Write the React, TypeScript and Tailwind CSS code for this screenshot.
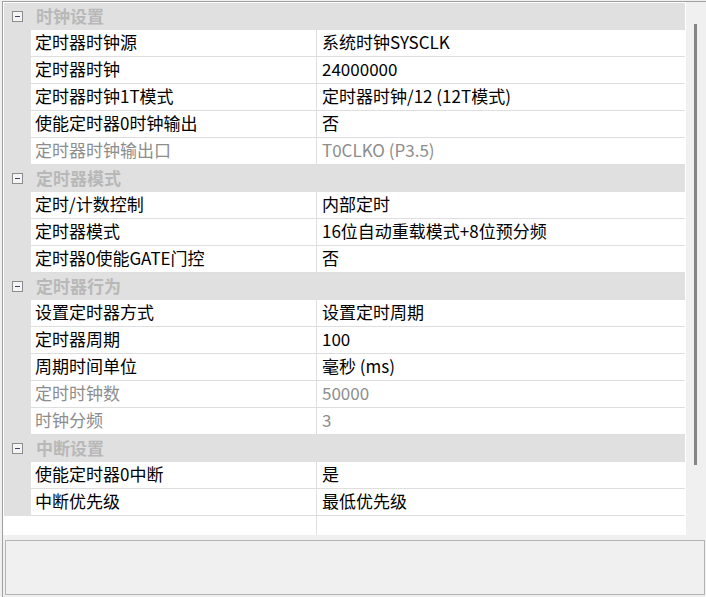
import React from "react";

type Prop = { name: string; value: string; disabled?: boolean };
type Category = { title: string; items: Prop[] };

const categories: Category[] = [
  {
    title: "时钟设置",
    items: [
      { name: "定时器时钟源", value: "系统时钟SYSCLK" },
      { name: "定时器时钟", value: "24000000" },
      { name: "定时器时钟1T模式", value: "定时器时钟/12 (12T模式)" },
      { name: "使能定时器0时钟输出", value: "否" },
      { name: "定时器时钟输出口", value: "T0CLKO (P3.5)", disabled: true },
    ],
  },
  {
    title: "定时器模式",
    items: [
      { name: "定时/计数控制", value: "内部定时" },
      { name: "定时器模式", value: "16位自动重载模式+8位预分频" },
      { name: "定时器0使能GATE门控", value: "否" },
    ],
  },
  {
    title: "定时器行为",
    items: [
      { name: "设置定时器方式", value: "设置定时周期" },
      { name: "定时器周期", value: "100" },
      { name: "周期时间单位", value: "毫秒 (ms)" },
      { name: "定时时钟数", value: "50000", disabled: true },
      { name: "时钟分频", value: "3", disabled: true },
    ],
  },
  {
    title: "中断设置",
    items: [
      { name: "使能定时器0中断", value: "是" },
      { name: "中断优先级", value: "最低优先级" },
    ],
  },
];

function MinusBox() {
  return (
    <div className="ml-[8px] flex h-[11px] w-[11px] items-center justify-center border border-[#8c8c8c] bg-[#f4f4f4]">
      <div className="h-px w-[5px] bg-[#3a4662]" />
    </div>
  );
}

function CategoryRow({ title }: { title: string }) {
  return (
    <div className="flex h-[27px] items-center bg-[#e0e0e0]">
      <div className="flex w-[27px] items-center">
        <MinusBox />
      </div>
      <span className="pb-[3px] pl-[5px] text-[17px] font-bold text-[#b8b8b8]">{title}</span>
    </div>
  );
}

function PropRow({ item }: { item: Prop }) {
  const color = item.disabled ? "text-[#8d8d8d]" : "text-black";
  return (
    <div className="flex h-[27px] bg-[#e0e0e0]">
      <div className="w-[27px]" />
      <div className="flex flex-1 border-b border-[#dedede] bg-white">
        <div className={`flex w-[286px] items-center border-r border-[#dedede] pb-[3px] pl-[4px] ${color}`}>
          <span className="whitespace-nowrap">{item.name}</span>
        </div>
        <div className={`flex flex-1 items-center pb-[3px] pl-[5px] ${color}`}>
          <span className="whitespace-nowrap">{item.value}</span>
        </div>
      </div>
    </div>
  );
}

export default function App() {
  return (
    <div
      className="h-[597px] w-[706px] overflow-hidden bg-[#f0f0f0] pl-[2px] pt-px text-[17px] leading-none"
      style={{ fontFamily: '"Noto Sans CJK SC", "Noto Sans", sans-serif' }}
    >
      <div className="flex h-[596px] flex-col border-l border-t border-[#a0a0a0]">
        <div className="flex h-[533px]">
          <div className="flex w-[683px] flex-col bg-white pl-px pr-px pt-px">
            {categories.map((cat) => (
              <div key={cat.title}>
                <CategoryRow title={cat.title} />
                {cat.items.map((item) => (
                  <PropRow key={item.name} item={item} />
                ))}
              </div>
            ))}
            <div className="flex flex-1">
              <div className="w-[27px]" />
              <div className="w-[286px] border-r border-[#dedede]" />
            </div>
          </div>
          <div className="w-[20px] bg-[#f0f0f0] pl-[8px] pt-[22px]">
            <div className="h-[441px] w-[3px] bg-[#858585]" />
          </div>
        </div>
        <div className="flex-1 pl-[2px] pr-px pt-[5px] pb-[2px]">
          <div className="h-[55px] border border-[#b4b4b4] bg-[#f0f0f0]" />
        </div>
      </div>
    </div>
  );
}
